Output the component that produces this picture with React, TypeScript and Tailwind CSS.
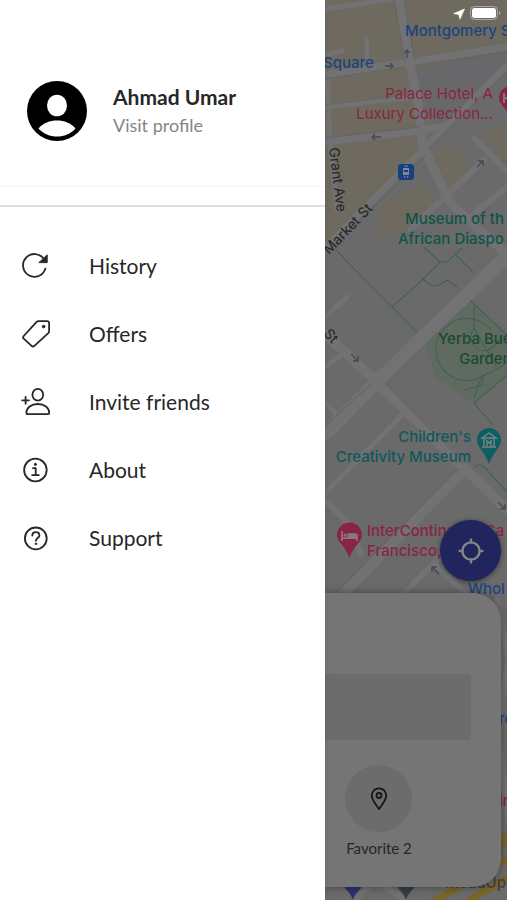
import React from 'react';

interface MenuItem {
  label: string;
  icon: React.ReactNode;
}

interface Place {
  lines: string[];
  className: string;
}

const menuItems: MenuItem[] = [
  {
    label: 'History',
    icon: (
      <>
        <path d="M22 7.200A11.400 11.400 0 1 0 23.400 16.600" />
        <path d="M25.200 3.200v7.400h-8z" fill="currentColor" strokeWidth="1" />
      </>
    ),
  },
  {
    label: 'Offers',
    icon: (
      <>
        <path d="M16.500 1.200h8.600q2 0 2 2v8q0 1.200-.8 2L12.400 25.800q-1.400 1.300-2.800 0L1.700 18.700q-1.300-1.300 0-2.700L14.400 2.100q.9-.9 2.100-.9z" />
        <circle cx="21.600" cy="6.600" r="1.300" fill="currentColor" strokeWidth="1" />
      </>
    ),
  },
  {
    label: 'Invite friends',
    icon: (
      <>
        <ellipse cx="15.800" cy="6.800" rx="5.400" ry="5.900" />
        <path d="M4.400 25c0-5.400 4.800-9 11.400-9s11.400 3.600 11.400 9q0 1.200-1.200 1.200H5.600q-1.200 0-1.200-1.200z" />
        <path d="M3.600 8.800v7M.2 12.300h6.800" />
      </>
    ),
  },
  {
    label: 'About',
    icon: (
      <>
        <circle cx="13.400" cy="14" r="11.300" />
        <path d="M11 12.200h2.700v6.800M10.200 19.200h6.600" />
        <circle cx="13.400" cy="8.400" r="1.100" fill="currentColor" strokeWidth="1" />
      </>
    ),
  },
  {
    label: 'Support',
    icon: (
      <>
        <circle cx="13.800" cy="14.400" r="10.900" />
        <path d="M10.300 11.600c0-2.200 1.500-3.400 3.500-3.400s3.600 1.300 3.600 3.200c0 2.500-3.500 2.700-3.500 5.400" />
        <circle cx="13.900" cy="19.800" r=".8" fill="currentColor" strokeWidth="1" />
      </>
    ),
  },
];

const places: Place[] = [
  { lines: ['Montgomery S'], className: 'left-[80px] top-[21px] font-medium text-[#1c4480]' },
  { lines: ['Square'], className: 'left-[-2px] top-[53px] font-medium text-[#1c4480]' },
  { lines: ['Palace Hotel, A', 'Luxury Collection...'], className: 'right-[14px] top-[84px] text-right text-[#8a2444]' },
  { lines: ['Museum of th', 'African Diaspo'], className: 'left-[73px] top-[209px] text-right font-medium text-[#0d5549]' },
  { lines: ['Yerba Bue', 'Garden'], className: 'left-[113px] top-[329px] text-right font-medium text-[#1a4a2c]' },
  { lines: ["Children's", 'Creativity Museum'], className: 'right-[36px] top-[427px] text-right font-medium text-[#0d5a5a]' },
  { lines: ['InterContinental Sa', 'Francisco, an IHG'], className: 'left-[42px] top-[521px] font-medium text-[#8a2444]' },
  { lines: ['Whol'], className: 'left-[143px] top-[579px] font-medium text-[#1c4480]' },
  { lines: ['ro'], className: 'left-[174px] top-[709px] font-medium text-[#1c4480]' },
  { lines: ['in'], className: 'left-[174px] top-[791px] font-medium text-[#8a2444]' },
  { lines: ['MeadUp'], className: 'right-[1px] top-[873px] font-medium text-[#3c4044]' },
];

const MapCanvas: React.FC = () => (
  <svg
    className="absolute inset-0 h-full w-full"
    viewBox="0 0 182 900"
    preserveAspectRatio="xMinYMin slice"
    fill="none"
    aria-hidden="true"
  >
    <rect width="182" height="900" fill="#6a6a6a" />
    {/* downtown blocks */}
    <g fill="#6e6a5f">
      <path d="M0 0h182v66L108 135 0 246z" />
      <path d="M59 203l36-20 20 20-30 27-36 7z" />
      <path d="M105 167l7-17 20-3 12 20-19 23z" />
      <path d="M155 134l27-12v44z" />
    </g>
    <path d="M90 68l92-16v16l-68 62-18-20z" fill="#68686a" />
    {/* parks */}
    <path d="M145 299l37 36v42l-33 26-39-26-10-34 8-10z" fill="#5f6b61" />
    <circle cx="142" cy="353" r="32" fill="#5f6b61" />
    {/* streets */}
    <g stroke="#727274" strokeLinecap="round" strokeLinejoin="round">
      <path d="M74-4l11 69 7 32 6 50 27 56 37 34 24 20" strokeWidth="9" />
      <path d="M0 75L182 47M0 142l95-11 24-5" strokeWidth="7" />
      <path d="M0 9L74-2M0 107l88-10M2 75l3 68 7 67" strokeWidth="5" />
      <path d="M0 55l17-4M42 40v20" strokeWidth="5" />
      <path d="M182 66l-84 84L0 248" strokeWidth="7" />
      <path d="M159 160l-74 70M149 138l33 34M182 187l-37 30" strokeWidth="6" />
      <path d="M186 252L52 382 0 434" strokeWidth="14" />
      <path d="M0 334l52 48 87 86 43 42" strokeWidth="10" />
      <path d="M22 297L0 317M19 353L0 367M0 403l15 14M79 413L0 493" strokeWidth="5" />
      <path d="M139 470L19 593" strokeWidth="10" />
      <path d="M125 547l-46 46M109 563l31 30M0 500l24 24 12 30" strokeWidth="6" />
      <path d="M172 600l12 60-12 70 12 90M30 900l20-20 30 20" strokeWidth="6" />
    </g>
    {/* street edges */}
    <g stroke="#626264" strokeWidth="1" opacity=".7">
      <path d="M0 79l79-12M91 66l91-14M0 105l88-11M0 138l94-11M103 149l79-78M3 252L102 154" />
      <path d="M69 0l11 62M79 0l11 62M60 383l79 80M46 384L0 426M134 468L17 586M62 382l76-74" />
    </g>
    {/* footpaths */}
    <g stroke="#3d6151" strokeWidth="1">
      <path d="M9 248l31 32 52 52M67 307l30-27 18-18-16-15M115 262h7l15-14M129 253l20 20" />
      <path d="M97 278l10 8 7-1 8-5 10 7" />
      <path d="M145 300l37 35M149 403l33-28M149 403l19 22M149 306v22l22 38" />
      <path d="M158 376a31 31 0 1 1 8-46M139 390l18-5 2-9M182 362c-10 8-16 10-25 14l-8 22" />
      <path d="M149 328c-8 12 2 26 14 22s8-16 19-14" />
      <path d="M182 492l-20-22q-8-9-13-2" />
    </g>
    {/* freeway */}
    <g stroke="#786528" strokeWidth="7">
      <path d="M104 904l78-45M138 904l44-26M174 850l8-16" />
    </g>
    {/* one-way arrows */}
    <g stroke="#4a4a52" strokeWidth="1.500">
      <path d="M60 66h8m-3-3 3 3-3 3M82 58v-8m-3 3 3-3 3 3M56 137h-9m3-3-3 3 3 3" />
      <path d="M152 167l6-6m-5 0h5v5M26 354l7 7m0-5v5h-5M173 502l7 7m0-5v5h-5M114 574l-7-7m0 5v-5h5" />
    </g>
    {/* tram stop */}
    <rect x="73" y="164" width="16" height="16" rx="3" fill="#173f83" />
    <path d="M78.500 168.500h5v6h-5zM79 166h4M79 178l1-2M83 178l-1-2" fill="#84878f" stroke="#84878f" />
    <path d="M79 170h4v2h-4z" fill="#173f83" />
    {/* hotel by the palace */}
    <path d="M174 98a12 12 0 0 1 24 0c0 7-8 9-12 22-4-13-12-15-12-22z" fill="#8a2444" />
    <path d="M179 93v10M179 98h8" stroke="#85787c" strokeWidth="2" />
    {/* museum */}
    <path d="M152 440a12 12 0 0 1 24 0c0 7-7 11-12 24-5-13-12-17-12-24z" fill="#0e5f63" />
    <path d="M157 438l7-5 7 5zM159 439v7M169 439v7M157 447h14M162 446v-5l2 2 2-2v5" stroke="#7d8585" strokeWidth="1.400" />
    {/* hotel */}
    <path d="M12 535a12 12 0 0 1 25 0c0 7-8 10-12.500 23C20 545 12 542 12 535z" fill="#8a2444" />
    <path d="M17 531v10M17 538h15v3M32 538v-2q0-2-2-2h-7v4" stroke="#85787c" strokeWidth="1.700" />
    <path d="M24 534h6l2 2v2h-8z" fill="#85787c" />
    <circle cx="20" cy="535" r="1.600" fill="#85787c" />
    {/* pins below the sheet */}
    <path d="M19 886h18c-2 5-6 5-9 14-3-9-7-9-9-14z" fill="#2c3268" />
    <path d="M72 886h18c-2 5-6 5-9 14-3-9-7-9-9-14z" fill="#363d42" />
    {/* street names */}
    <g fill="#242426" className="font-['Inter',sans-serif] text-[14px]">
      <text transform="translate(4 148) rotate(83)">Grant Ave</text>
      <text transform="translate(4 255) rotate(-46)">Market St</text>
      <text transform="translate(-2 334) rotate(48)">St</text>
    </g>
  </svg>
);

const StatusBar: React.FC = () => (
  <div className="relative flex items-center justify-end gap-1 pt-1">
    <svg className="h-4 w-3" viewBox="0 0 12 16" fill="#fff" aria-hidden="true">
      <path d="M11.500 4L7 14.200 5.700 9.600.6 8.600z" stroke="#fff" strokeLinejoin="round" strokeWidth=".6" />
    </svg>
    <svg className="h-[18px] w-8" viewBox="0 0 32 18" fill="none" aria-hidden="true">
      <rect x="1.500" y="2.500" width="27" height="13" rx="4" stroke="#a8a8a8" />
      <rect x="3" y="4" width="24" height="10" rx="2.500" fill="#fff" />
      <path d="M30 7v4q1.500-.5 1.500-2T30 7z" fill="#a8a8a8" />
    </svg>
  </div>
);

const Drawer: React.FC = () => (
  <aside className="relative z-10 flex w-[64.1%] shrink-0 flex-col bg-white text-[#272727] shadow-md">
    <a href="#profile" className="flex h-[187px] items-start gap-[26px] border-b border-[#f4f4f4] pt-[81px] pl-[27px]">
      <svg className="h-[60px] w-[60px] shrink-0" viewBox="0 0 60 60" aria-hidden="true">
        <circle cx="30" cy="30" r="30" fill="#000" />
        <ellipse cx="30" cy="24.500" rx="10" ry="10.800" fill="#fff" />
        <path d="M11.500 47.500C16 42 23 39.500 30 39.500s14 2.500 18.500 8C43.500 53 37 55.500 30 55.500s-13.500-2.500-18.500-8z" fill="#fff" />
      </svg>
      <span className="flex flex-col pt-0.5">
        <span className="text-[21px] leading-7 font-bold">Ahmad Umar</span>
        <span className="text-[18px] leading-7 text-[#858585]">Visit profile</span>
      </span>
    </a>
    <nav className="mt-[18px] border-t-2 border-[#dedede] pt-[25px]">
      {menuItems.map((item) => (
        <a key={item.label} href={`#${item.label.toLowerCase().replace(' ', '-')}`} className="flex h-[68px] items-center gap-[39px] pl-[22px]">
          <svg
            className="h-7 w-7 shrink-0 overflow-visible"
            viewBox="0 0 28 28"
            fill="none"
            stroke="currentColor"
            strokeWidth="1.800"
            strokeLinecap="round"
            strokeLinejoin="round"
            aria-hidden="true"
          >
            {item.icon}
          </svg>
          <span className="text-[21px] leading-7">{item.label}</span>
        </a>
      ))}
    </nav>
  </aside>
);

const BottomSheet: React.FC = () => (
  <section className="relative w-full rounded-r-[28px] bg-[#757575] pt-[81px] pb-[29px] shadow-[0_0_8px_rgba(0,0,0,0.4)]">
    <input
      type="text"
      aria-label="Destination"
      className="block h-[66px] w-[calc(100%-30px)] rounded-r bg-[#6c6c6c] px-4 outline-none"
    />
    <button type="button" className="mt-[25px] ml-[19px] flex w-[70px] flex-col items-center gap-1.5 text-[#252525]">
      <span className="flex h-[67px] w-[67px] items-center justify-center rounded-full bg-[#6c6c6c]">
        <svg className="h-6 w-6" viewBox="0 0 24 24" fill="none" stroke="#161616" strokeWidth="1.800" aria-hidden="true">
          <path d="M12 22C9.500 18 4.800 13.500 4.800 8.500a7.200 7.200 0 0 1 14.400 0c0 5-4.700 9.500-7.200 13.500z" strokeLinejoin="round" />
          <circle cx="12" cy="8.500" r="2.500" />
        </svg>
      </span>
      <span className="text-[15px] leading-5 whitespace-nowrap">Favorite 2</span>
    </button>
  </section>
);

const App: React.FC = () => {
  return (
    <div className="flex min-h-screen overflow-hidden font-['Lato',sans-serif]">
      <Drawer />
      <main className="relative flex flex-1 flex-col overflow-hidden bg-[#6a6a6a] pr-1.5 pb-[13px]">
        <MapCanvas />
        {places.map((place) => (
          <p
            key={place.lines[0]}
            className={`absolute font-['Inter',sans-serif] text-[15px] leading-5 whitespace-nowrap ${place.className}`}
          >
            {place.lines.map((line) => (
              <span key={line} className="block">
                {line}
              </span>
            ))}
          </p>
        ))}
        <StatusBar />
        <button
          type="button"
          aria-label="My location"
          className="relative mt-auto mb-3 flex h-[61px] w-[61px] items-center justify-center self-end rounded-full bg-[#20255d] shadow-[0_1px_5px_rgba(0,0,0,0.5)]"
        >
          <svg className="h-7 w-7" viewBox="0 0 28 28" fill="none" stroke="#858585" strokeWidth="2.400" strokeLinecap="round" aria-hidden="true">
            <circle cx="14" cy="14" r="8.600" />
            <path d="M14 2.600v2.800M14 22.600v2.800M2.600 14h2.800M22.600 14h2.800" />
          </svg>
        </button>
        <BottomSheet />
      </main>
    </div>
  );
};

export default App;
